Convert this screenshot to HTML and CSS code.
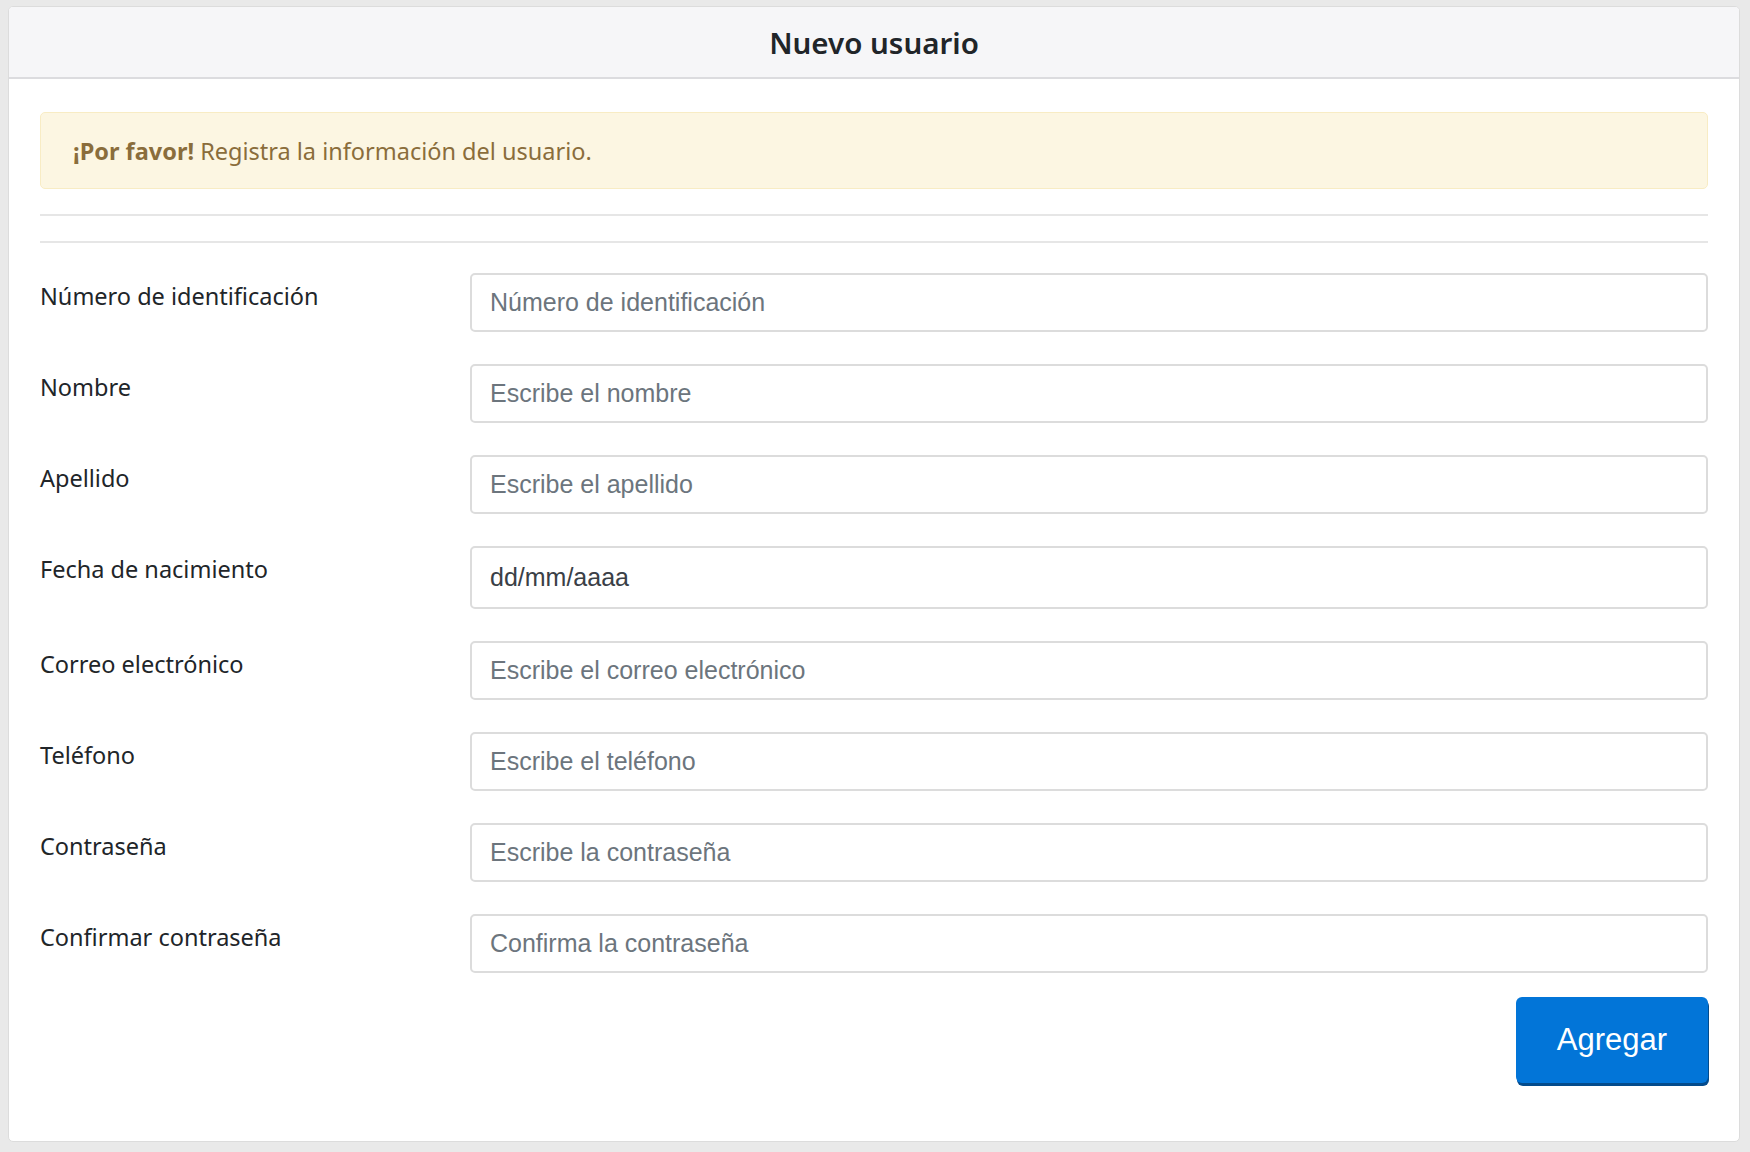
FILE: index.html
```html
<!DOCTYPE html>
<html lang="es">
<head>
<meta charset="utf-8">
<title>Nuevo usuario</title>
<link rel="stylesheet" href="styles.css">
</head>
<body>
<div class="card">
  <div class="card-header"><h1 class="title">Nuevo usuario</h1></div>
  <div class="card-body">
    <div class="alert"><strong>¡Por favor!</strong> Registra la información del usuario.</div>
    <hr class="sep">
    <hr class="sep sep2">
    <form class="form">
      <div class="row">
        <label class="label">Número de identificación</label>
        <input class="field" type="text" placeholder="Número de identificación">
      </div>
      <div class="row">
        <label class="label">Nombre</label>
        <input class="field" type="text" placeholder="Escribe el nombre">
      </div>
      <div class="row">
        <label class="label">Apellido</label>
        <input class="field" type="text" placeholder="Escribe el apellido">
      </div>
      <div class="row">
        <label class="label">Fecha de nacimiento</label>
        <input class="field field-date" type="text" value="dd/mm/aaaa">
      </div>
      <div class="row">
        <label class="label">Correo electrónico</label>
        <input class="field" type="text" placeholder="Escribe el correo electrónico">
      </div>
      <div class="row">
        <label class="label">Teléfono</label>
        <input class="field" type="text" placeholder="Escribe el teléfono">
      </div>
      <div class="row">
        <label class="label">Contraseña</label>
        <input class="field" type="text" placeholder="Escribe la contraseña">
      </div>
      <div class="row">
        <label class="label">Confirmar contraseña</label>
        <input class="field" type="text" placeholder="Confirma la contraseña">
      </div>
      <div class="actions">
        <button class="btn" type="button">Agregar</button>
      </div>
    </form>
  </div>
</div>
</body>
</html>
```
FILE: styles.css
```css
html, body {
  margin: 0;
  padding: 0;
}
body {
  background: #e9e9e9;
  font-family: "Noto Sans", "Open Sans", sans-serif;
  color: #212529;
  padding: 6px 10px 10px 8px;
  height: 1152px;
  box-sizing: border-box;
}
.card {
  background: #fff;
  border: 1px solid #dcdcdc;
  border-radius: 5px;
  height: 1136px;
  box-sizing: border-box;
  overflow: hidden;
}
.card-header {
  background: #f6f6f8;
  border-bottom: 2px solid #dcdcdf;
  height: 72px;
  box-sizing: border-box;
  display: flex;
  align-items: center;
  justify-content: center;
}
.title {
  margin: 0;
  font-size: 29.5px;
  font-weight: 600;
  color: #212529;
}
.card-body {
  padding: 33px 31px 0 31px;
}
.alert {
  background: #fcf6e2;
  border: 1px solid #f8ecc4;
  border-radius: 5px;
  color: #8a6d3b;
  font-size: 23.5px;
  height: 77px;
  box-sizing: border-box;
  padding: 0 32px;
  display: flex;
  align-items: center;
  white-space: pre;
}
.alert strong {
  font-weight: 700;
}
.sep {
  border: 0;
  border-top: 2px solid #e6e6e6;
  margin: 25px 0 0 0;
}
.sep2 {
  margin-top: 25px;
}
.form {
  margin-top: 30px;
}
.row {
  display: flex;
  align-items: flex-start;
  margin-bottom: 32px;
}
.label {
  width: 430px;
  flex: none;
  font-size: 23.5px;
  line-height: 33px;
  padding-top: 7px;
  color: #212529;
}
.field {
  flex: 1;
  min-width: 0;
  height: 59px;
  box-sizing: border-box;
  border: 2px solid #dcdcdc;
  border-radius: 5px;
  padding: 0 18px;
  font-family: "Liberation Sans", Arial, sans-serif;
  font-size: 25px;
  color: #495057;
  background: #fff;
  outline: none;
}
.field::placeholder {
  color: #6c757d;
  opacity: 1;
}
.field-date {
  height: 63px;
  padding-top: 2px;
  padding-bottom: 2px;
  color: #3a4046;
}
.actions {
  display: flex;
  justify-content: flex-end;
  margin-top: -8px;
}
.btn {
  width: 192px;
  height: 86px;
  background: #0275d8;
  color: #fff;
  border: 0;
  border-radius: 6px;
  box-shadow: 1px 3px 0 #034b8c;
  font-family: "Liberation Sans", Arial, sans-serif;
  font-size: 31px;
  cursor: pointer;
}
```
